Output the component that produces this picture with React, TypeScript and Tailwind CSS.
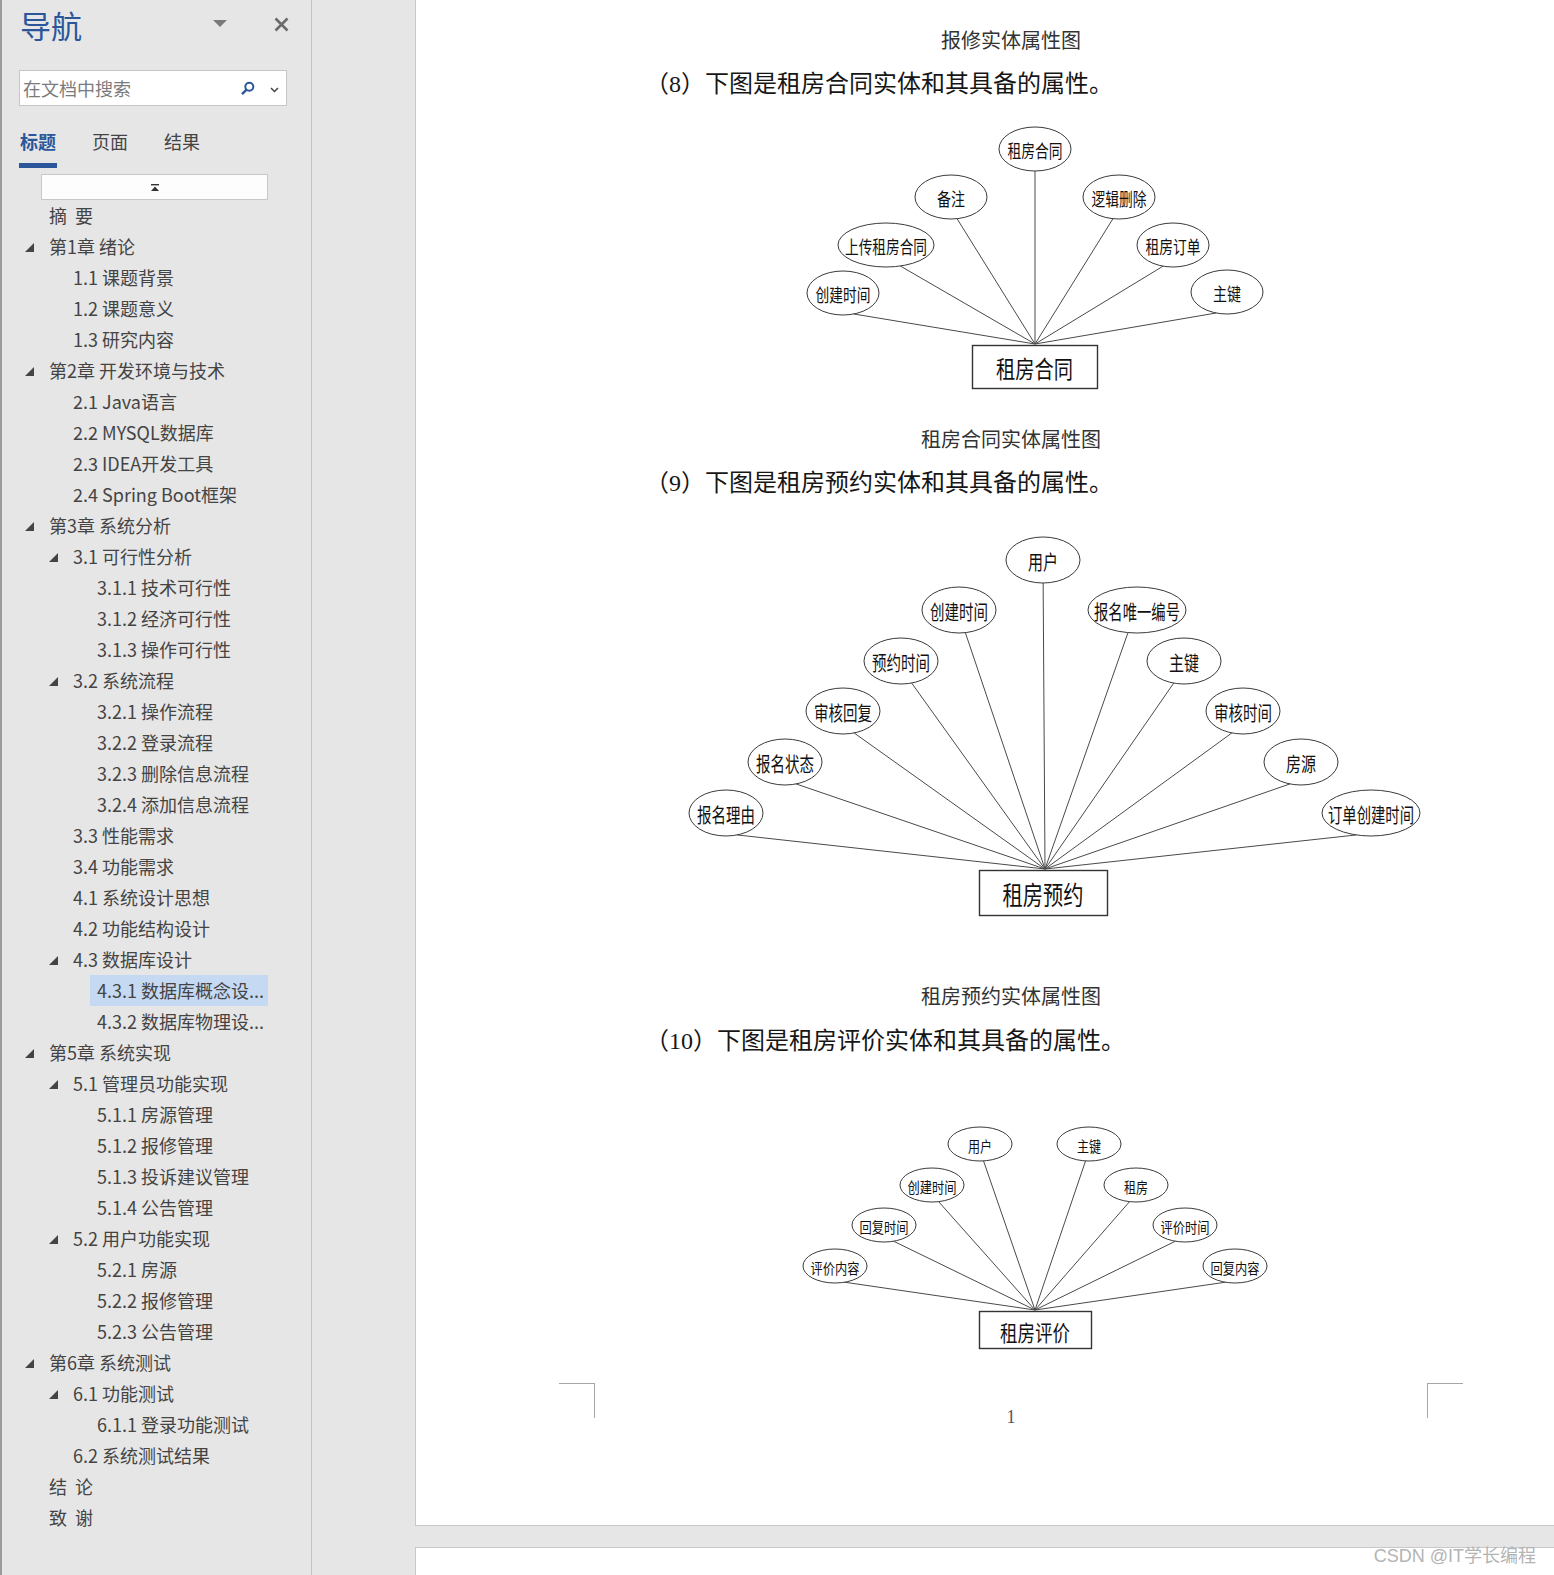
import React from "react";

type Item = { text: string; level: number; open?: boolean; selected?: boolean };

const items: Item[] = [
  { text: "摘  要", level: 0 },
  { text: "第1章 绪论", level: 0, open: true },
  { text: "1.1 课题背景", level: 1 },
  { text: "1.2 课题意义", level: 1 },
  { text: "1.3 研究内容", level: 1 },
  { text: "第2章 开发环境与技术", level: 0, open: true },
  { text: "2.1 Java语言", level: 1 },
  { text: "2.2 MYSQL数据库", level: 1 },
  { text: "2.3 IDEA开发工具", level: 1 },
  { text: "2.4 Spring Boot框架", level: 1 },
  { text: "第3章 系统分析", level: 0, open: true },
  { text: "3.1 可行性分析", level: 1, open: true },
  { text: "3.1.1 技术可行性", level: 2 },
  { text: "3.1.2 经济可行性", level: 2 },
  { text: "3.1.3 操作可行性", level: 2 },
  { text: "3.2 系统流程", level: 1, open: true },
  { text: "3.2.1 操作流程", level: 2 },
  { text: "3.2.2 登录流程", level: 2 },
  { text: "3.2.3 删除信息流程", level: 2 },
  { text: "3.2.4 添加信息流程", level: 2 },
  { text: "3.3 性能需求", level: 1 },
  { text: "3.4 功能需求", level: 1 },
  { text: "4.1 系统设计思想", level: 1 },
  { text: "4.2 功能结构设计", level: 1 },
  { text: "4.3 数据库设计", level: 1, open: true },
  { text: "4.3.1 数据库概念设...", level: 2, selected: true },
  { text: "4.3.2 数据库物理设...", level: 2 },
  { text: "第5章 系统实现", level: 0, open: true },
  { text: "5.1 管理员功能实现", level: 1, open: true },
  { text: "5.1.1 房源管理", level: 2 },
  { text: "5.1.2 报修管理", level: 2 },
  { text: "5.1.3 投诉建议管理", level: 2 },
  { text: "5.1.4 公告管理", level: 2 },
  { text: "5.2 用户功能实现", level: 1, open: true },
  { text: "5.2.1 房源", level: 2 },
  { text: "5.2.2 报修管理", level: 2 },
  { text: "5.2.3 公告管理", level: 2 },
  { text: "第6章 系统测试", level: 0, open: true },
  { text: "6.1 功能测试", level: 1, open: true },
  { text: "6.1.1 登录功能测试", level: 2 },
  { text: "6.2 系统测试结果", level: 1 },
  { text: "结  论", level: 0 },
  { text: "致  谢", level: 0 },
];

const indent = ["w-[23px]", "w-[47px]", "w-[71px]"];

type Node = { t: string; cx: number; cy: number; rx?: number; tl: number };
type DiagramProps = {
  top: number;
  height: number;
  nodes: Node[];
  rx: number;
  ry: number;
  fs: number;
  join: [number, number];
  box: { x: number; y: number; w: number; h: number; label: string; fs: number; tl: number };
};

// lines leave each oval near its bottom, nudged toward the entity box
function attach(n: Node, rx: number, ry: number, jx: number) {
  const r = n.rx ?? rx;
  const f = Math.max(-0.3, Math.min(0.3, (jx - n.cx) / 500));
  return { x: n.cx + f * r, y: n.cy + ry * Math.sqrt(1 - f * f) };
}

function Diagram({ top, height, nodes, rx, ry, fs, join, box }: DiagramProps) {
  return (
    <svg width={920} height={height} viewBox={`595 ${top} 920 ${height}`} className="block">
      {nodes.map((n) => {
        const p = attach(n, rx, ry, join[0]);
        return <line key={"l" + n.t + n.cx} x1={p.x} y1={p.y} x2={join[0]} y2={join[1]} stroke="#4a4a4a" strokeWidth={1} />;
      })}
      {nodes.map((n) => (
        <g key={"e" + n.t + n.cx}>
          <ellipse cx={n.cx} cy={n.cy} rx={n.rx ?? rx} ry={ry} fill="#fff" stroke="#3a3a3a" strokeWidth={1} />
          <text
            x={n.cx}
            y={n.cy + 1}
            textAnchor="middle"
            dominantBaseline="central"
            fontSize={fs}
            textLength={n.tl}
            lengthAdjust="spacingAndGlyphs"
            fill="#111"
            fontFamily="'Noto Sans CJK SC', sans-serif"
          >
            {n.t}
          </text>
        </g>
      ))}
      <rect x={box.x + 0.5} y={box.y + 0.5} width={box.w} height={box.h} fill="#fff" stroke="#333" strokeWidth={1.4} />
      <text
        x={box.x + box.w / 2}
        y={box.y + box.h / 2 + 1}
        textAnchor="middle"
        dominantBaseline="central"
        fontSize={box.fs}
        textLength={box.tl}
        lengthAdjust="spacingAndGlyphs"
        fill="#111"
        fontFamily="'Noto Sans CJK SC', sans-serif"
      >
        {box.label}
      </text>
    </svg>
  );
}

function Caption({ children }: { children: React.ReactNode }) {
  return <div className="h-[24px] text-center text-[20px] leading-[24px] text-[#333]">{children}</div>;
}

function Para({ children, mt }: { children: React.ReactNode; mt: string }) {
  return <div className={`${mt} h-[24px] pl-[50px] text-[24px] leading-[24px] text-[#161616] whitespace-nowrap`}>{children}</div>;
}

function NavPane() {
  return (
    <aside className="w-[312px] shrink-0 border-l-2 border-r border-l-[#9b9b9b] border-r-[#c3c3c3] bg-[#e6e6e6] font-['Noto_Sans_CJK_SC',sans-serif]">
      <div className="flex h-[54px] items-center">
        <span className="ml-[18px] mb-[5px] text-[31px] leading-[31px] text-[#2b579a]">导航</span>
        <svg width="14" height="8" viewBox="0 0 14 8" className="ml-auto mb-[6px]">
          <polygon points="0,0 14,0 7,7" fill="#7a7a7a" />
        </svg>
        <svg width="15" height="15" viewBox="0 0 15 15" className="ml-[47px] mr-[22px] mb-[6px]">
          <path d="M1.5 1.5 L13.5 13.5 M13.5 1.5 L1.5 13.5" stroke="#6a6a6a" strokeWidth="2.6" />
        </svg>
      </div>
      <div className="ml-[17px] mt-[16px] flex h-[36px] w-[268px] items-center border border-[#c6c6c6] bg-white">
        <span className="pl-[3px] text-[18px] text-[#7b7b7b]">在文档中搜索</span>
        <svg width="15" height="15" viewBox="0 0 15 15" className="ml-auto">
          <circle cx="9.3" cy="5.7" r="4" fill="none" stroke="#2b579a" strokeWidth="2" />
          <path d="M6.6 8.6 L2 13.2" stroke="#2b579a" strokeWidth="2.4" />
        </svg>
        <svg width="9" height="6" viewBox="0 0 9 6" className="ml-[15px] mr-[7px] mt-[3px]">
          <path d="M1 1 L4.5 4.5 L8 1" fill="none" stroke="#444" strokeWidth="1.5" />
        </svg>
      </div>
      <div className="ml-[17px] mt-[16px] flex gap-[34px]">
        {["标题", "页面", "结果"].map((t, i) => (
          <div key={t} className="flex w-[38px] flex-col items-center">
            <span className={`h-[38px] text-[18px] leading-[38px] ${i === 0 ? "font-bold text-[#2b579a]" : "text-[#444]"}`}>{t}</span>
            <div className={`mt-[3px] h-[5px] w-[38px] ${i === 0 ? "bg-[#2b579a]" : ""}`} />
          </div>
        ))}
      </div>
      <div className="ml-[39px] mt-[6px] flex h-[26px] w-[227px] items-center justify-center border border-[#c8c8c8] bg-[#fdfdfd]">
        <svg width="8" height="7" viewBox="0 0 8 7">
          <rect x="0" y="0" width="8" height="1.4" fill="#333" />
          <polygon points="4,2.4 8,7 0,7" fill="#333" />
        </svg>
      </div>
      <div className="w-[266px]">
        {items.map((it) => (
          <div key={it.text} className="flex h-[31px] items-center">
            <div className={`${indent[it.level]} shrink-0`} />
            <div className="flex w-[17px] shrink-0 items-center">
              {it.open && (
                <svg width="9" height="9" viewBox="0 0 9 9" className="mt-[2px]">
                  <polygon points="9,0 9,9 0,9" fill="#444" />
                </svg>
              )}
            </div>
            <div
              className={`h-[31px] min-w-0 flex-1 overflow-hidden whitespace-pre pl-[7px] text-[18px] leading-[31px] text-[#444] ${
                it.selected ? "bg-[#c5d9f3]" : ""
              }`}
            >
              {it.text}
            </div>
          </div>
        ))}
      </div>
    </aside>
  );
}

export default function App() {
  return (
    <div className="relative flex h-[1575px] w-[1554px] overflow-hidden bg-[#e6e6e6]">
      <NavPane />
      <div className="w-[103px] shrink-0" />
      <main className="flex flex-1 flex-col font-['Liberation_Serif','Noto_Sans_CJK_SC',serif]">
        <section className="h-[1526px] border-b border-l border-[#c8c8c8] bg-white">
          <div className="ml-[179px] w-[832px] pt-[29px]">
            <Caption>报修实体属性图</Caption>
            <Para mt="mt-[19px]">（8）下图是租房合同实体和其具备的属性。</Para>
            <Diagram
              top={96}
              height={332}
              rx={36}
              ry={22}
              fs={18}
              join={[1035, 344]}
              box={{ x: 972, y: 345, w: 125, h: 43, label: "租房合同", fs: 24, tl: 77 }}
              nodes={[
                { t: "租房合同", cx: 1035, cy: 149, tl: 55 },
                { t: "备注", cx: 951, cy: 197, tl: 28 },
                { t: "逻辑删除", cx: 1119, cy: 197, tl: 55 },
                { t: "上传租房合同", cx: 886, cy: 245, rx: 48, tl: 82 },
                { t: "租房订单", cx: 1173, cy: 245, tl: 55 },
                { t: "创建时间", cx: 843, cy: 293, tl: 55 },
                { t: "主键", cx: 1227, cy: 292, tl: 28 },
              ]}
            />
            <Caption>租房合同实体属性图</Caption>
            <Para mt="mt-[19px]">（9）下图是租房预约实体和其具备的属性。</Para>
            <Diagram
              top={495}
              height={490}
              rx={37}
              ry={23}
              fs={20}
              join={[1045, 869]}
              box={{ x: 979, y: 870, w: 128, h: 45, label: "租房预约", fs: 26, tl: 81 }}
              nodes={[
                { t: "用户", cx: 1043, cy: 560, tl: 30 },
                { t: "创建时间", cx: 959, cy: 610, tl: 58 },
                { t: "报名唯一编号", cx: 1137, cy: 610, rx: 49, tl: 86 },
                { t: "预约时间", cx: 901, cy: 661, tl: 58 },
                { t: "主键", cx: 1184, cy: 661, tl: 30 },
                { t: "审核回复", cx: 843, cy: 711, tl: 58 },
                { t: "审核时间", cx: 1243, cy: 711, tl: 58 },
                { t: "报名状态", cx: 785, cy: 762, tl: 58 },
                { t: "房源", cx: 1301, cy: 762, tl: 30 },
                { t: "报名理由", cx: 726, cy: 813, tl: 58 },
                { t: "订单创建时间", cx: 1371, cy: 813, rx: 49, tl: 86 },
              ]}
            />
            <Caption>租房预约实体属性图</Caption>
            <Para mt="mt-[20px]">（10）下图是租房评价实体和其具备的属性。</Para>
            <Diagram
              top={1053}
              height={330}
              rx={32}
              ry={17}
              fs={15}
              join={[1035, 1310]}
              box={{ x: 979, y: 1311, w: 112, h: 37, label: "租房评价", fs: 22, tl: 70 }}
              nodes={[
                { t: "用户", cx: 980, cy: 1144, tl: 24 },
                { t: "主键", cx: 1089, cy: 1144, tl: 24 },
                { t: "创建时间", cx: 932, cy: 1185, tl: 49 },
                { t: "租房", cx: 1136, cy: 1185, tl: 24 },
                { t: "回复时间", cx: 884, cy: 1225, tl: 49 },
                { t: "评价时间", cx: 1185, cy: 1225, tl: 49 },
                { t: "评价内容", cx: 835, cy: 1266, tl: 49 },
                { t: "回复内容", cx: 1235, cy: 1266, tl: 49 },
              ]}
            />
          </div>
          <div className="flex pl-[143px]">
            <div className="h-[35px] w-[36px] border-r border-t border-[#a6a6a6]" />
            <div className="w-[832px] pt-[22px] text-center text-[18px] leading-[24px] text-[#555]">1</div>
            <div className="h-[35px] w-[36px] border-l border-t border-[#a6a6a6]" />
          </div>
        </section>
        <div className="h-[21px]" />
        <section className="flex-1 border-l border-t border-[#c8c8c8] bg-white" />
      </main>
      <div className="absolute bottom-[7px] right-[18px] font-['Liberation_Sans','Noto_Sans_CJK_SC',sans-serif] text-[18px] leading-[24px] text-[#b4b4b4]">
        CSDN @IT学长编程
      </div>
    </div>
  );
}
